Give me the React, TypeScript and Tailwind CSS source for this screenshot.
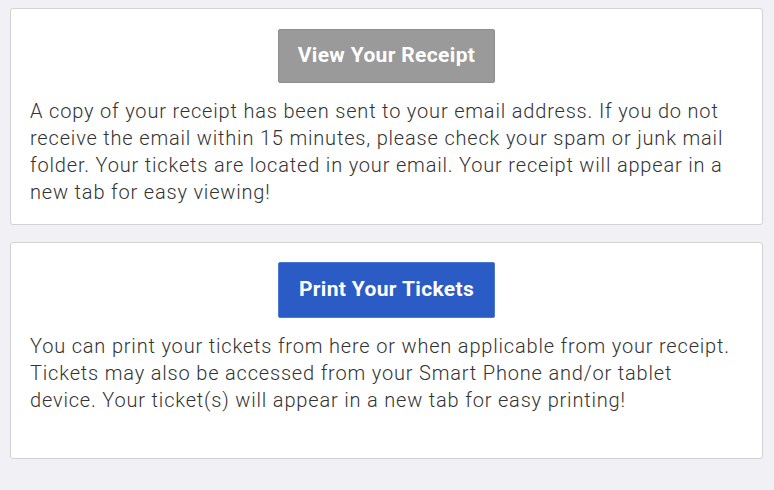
export default function App() {
  return (
    <div className="min-h-[490px] bg-[#f0f0f5] px-[10px] pt-[8px] font-['Roboto',sans-serif] text-[#333333]">
      <div className="flex flex-col gap-[17px] w-[753px]">
        <div className="h-[217px] bg-white border border-[#d2d2d2] rounded-[3px] px-[19px] pt-[20px]">
          <div className="flex justify-center">
            <button className="w-[217px] h-[54px] bg-[#9a9a9a] text-white text-[21px] tracking-[0.35px] font-bold border border-[#8e8e8e] rounded-[2px]">
              View Your Receipt
            </button>
          </div>
          <p className="mt-[15px] text-[20px] font-light tracking-[0.82px] leading-[27px]">
            A copy of your receipt has been sent to your email address. If you do not receive the email within 15 minutes, please check your spam or junk mail folder. Your tickets are located in your email. Your receipt will appear in a new tab for easy viewing!
          </p>
        </div>
        <div className="h-[217px] bg-white border border-[#d2d2d2] rounded-[3px] px-[19px] pt-[19px]">
          <div className="flex justify-center">
            <button className="w-[217px] h-[56px] bg-[#2b5bc5] text-white text-[21px] tracking-[0.35px] font-bold border border-[#4a78d6] rounded-[2px]">
              Print Your Tickets
            </button>
          </div>
          <p className="mt-[15px] text-[20px] font-light tracking-[0.82px] leading-[27px]">
            You can print your tickets from here or when applicable from your receipt. Tickets may also be accessed from your Smart Phone and/or tablet device. Your ticket(s) will appear in a new tab for easy printing!
          </p>
        </div>
      </div>
    </div>
  );
}
